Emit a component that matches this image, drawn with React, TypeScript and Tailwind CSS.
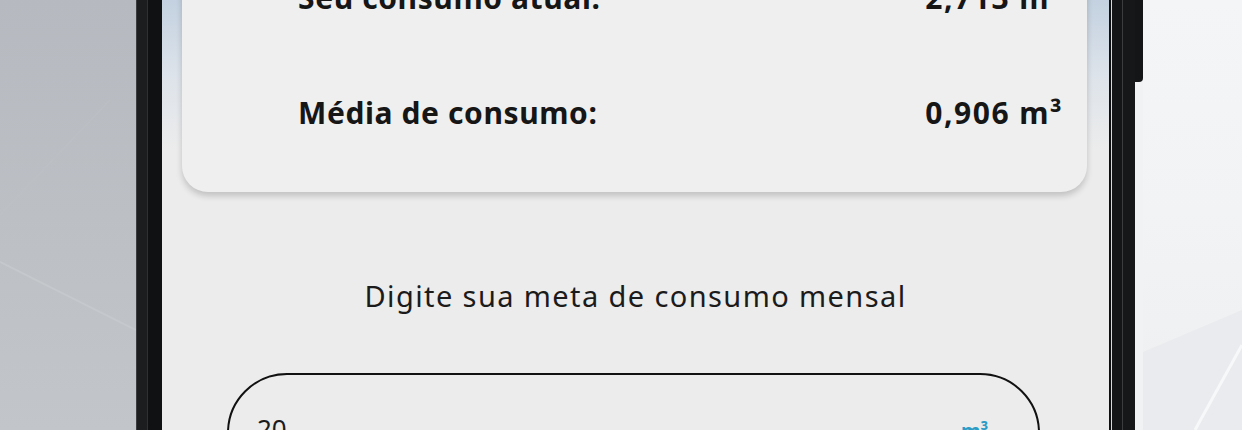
import React from "react";

const font = { fontFamily: '"Noto Sans", "Open Sans", sans-serif' };

function LeftBg() {
  return (
    <div className="relative h-full w-[136px] shrink-0 bg-gradient-to-b from-[#b6bac0] via-[#bcc0c5] to-[#c2c5c9]">
      <svg className="absolute inset-0 h-full w-full" viewBox="0 0 136 430" preserveAspectRatio="none">
        <line x1="0" y1="262" x2="136" y2="330" stroke="#c8cbcf" strokeWidth="2" opacity="0.7" />
        <line x1="0" y1="215" x2="110" y2="100" stroke="#c0c3c7" strokeWidth="1.5" opacity="0.35" />
      </svg>
    </div>
  );
}

function RightBg() {
  return (
    <div className="relative h-full flex-1 bg-gradient-to-b from-[#f4f5f6] via-[#f2f3f4] to-[#eeeff1]">
      <svg className="absolute inset-0 h-full w-full" viewBox="0 0 99 430" preserveAspectRatio="none">
        <polygon points="0,352 99,310 99,430 0,430" fill="#eaebee" />
        <line x1="52" y1="430" x2="99" y2="345" stroke="#f7f8f9" strokeWidth="3" />
      </svg>
    </div>
  );
}

export default function App() {
  return (
    <div className="flex h-[430px] w-[1242px] overflow-hidden bg-[#f1f2f4]" style={font}>
      <LeftBg />
      {/* left bezel */}
      <div className="flex h-full w-[26px] shrink-0">
        <div className="h-full w-[1px] bg-[#3a3c3e]" />
        <div className="h-full w-[10px] bg-[#1c1d1e]" />
        <div className="h-full w-[1px] bg-[#2e3031]" />
        <div className="h-full w-[14px] bg-[#101112]" />
      </div>
      {/* screen */}
      <div className="relative h-full w-[947px] shrink-0 overflow-hidden bg-[#ececec]">
        <div className="absolute left-0 top-0 h-[150px] w-full bg-gradient-to-b from-[#c3d1e0] via-[#dde3ea] to-[#ececec]" />
        <div className="relative flex flex-col">
          <div className="ml-[20px] mr-[22px] mt-[-80px] rounded-[26px] bg-[#efefef] pb-[22px] pl-[116px] pr-[24px] pt-[20px] shadow-[0_4px_6px_rgba(0,0,0,0.18)]">
            <div className="flex h-[115px] items-center justify-between text-[30px] font-bold text-[#161616]">
              <span className="tracking-[0.6px]">Seu consumo atual:</span>
              <span className="tracking-[1.5px]">2,713 m³</span>
            </div>
            <div className="flex h-[115px] items-center justify-between text-[30px] font-bold text-[#161616]">
              <span className="tracking-[0.6px]">Média de consumo:</span>
              <span className="tracking-[1.5px]">0,906 m³</span>
            </div>
          </div>
          <div className="mt-[84px] text-center text-[29px] leading-[40px] tracking-[1.4px] text-[#1b1b1b]">
            Digite sua meta de consumo mensal
          </div>
          <div className="ml-[65px] mr-[69px] mt-[57px] flex h-[130px] items-start justify-between rounded-[60px] border-2 border-[#111] pl-[28px] pr-[50px] pt-[38px]">
            <span className="text-[26px] leading-[30px] text-[#1b1b1b]">20</span>
            <span className="mt-[6px] text-[20px] font-bold leading-[24px] text-[#2a9cc6]">m³</span>
          </div>
        </div>
      </div>
      {/* right bezel */}
      <div className="flex h-full w-[26px] shrink-0">
        <div className="h-full w-[2px] bg-[#0f1011]" />
        <div className="h-full w-[1px] bg-[#d8dadc]" />
        <div className="h-full w-[10px] bg-[#141516]" />
        <div className="h-full w-[1px] bg-[#3a3c3e]" />
        <div className="h-full w-[12px] bg-[#161718]" />
      </div>
      <div className="relative h-full w-[8px] shrink-0 bg-[#f1f2f4]">
        <div className="h-[82px] w-[8px] rounded-br-[4px] bg-[#141516]" />
      </div>
      <RightBg />
    </div>
  );
}
